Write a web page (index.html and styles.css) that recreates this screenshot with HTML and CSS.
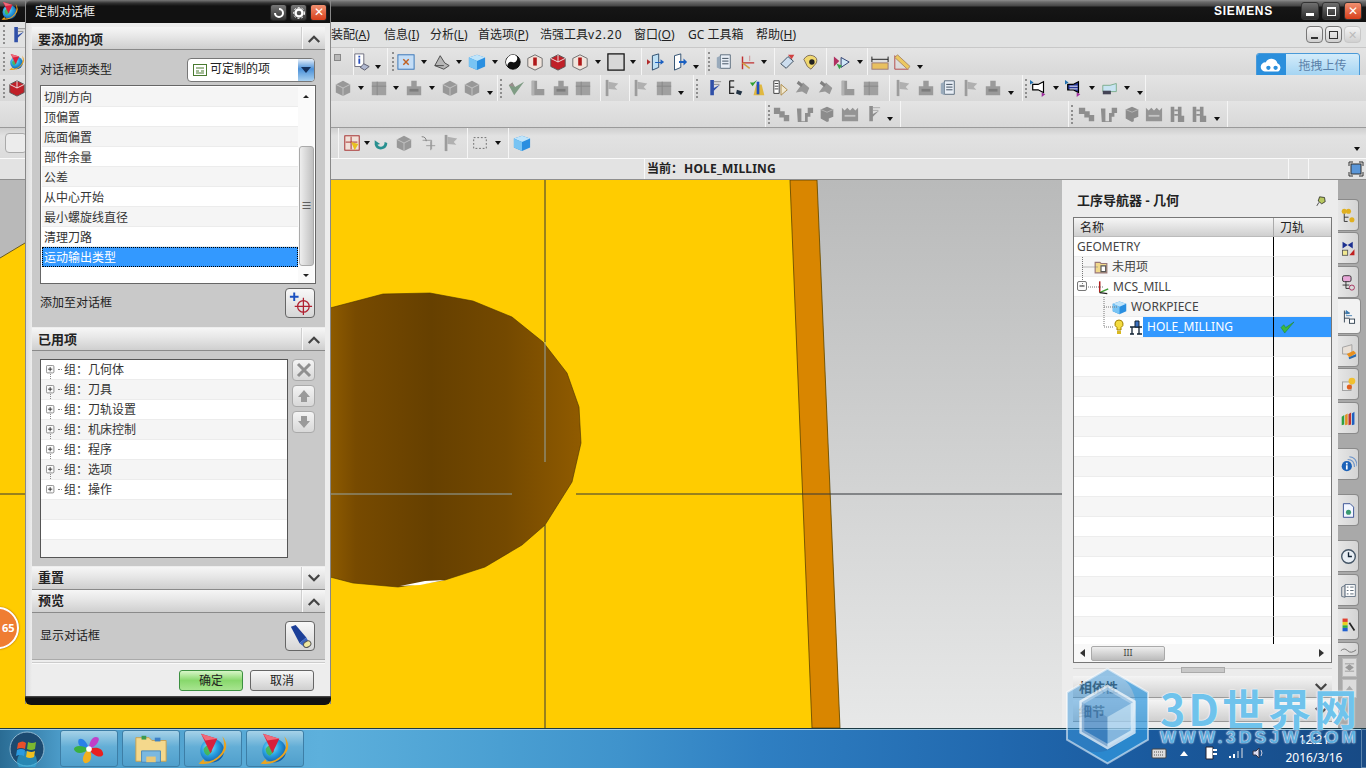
FILE: index.html
```html
<!DOCTYPE html>
<html lang="zh">
<head>
<meta charset="utf-8">
<title>NX</title>
<link rel="stylesheet" href="styles.css">
</head>
<body>
<svg class="defs" width="0" height="0">
<defs>
<radialGradient id="globe" cx=".38" cy=".35" r=".75"><stop offset="0" stop-color="#9fe6f4"/><stop offset=".45" stop-color="#2aa2e2"/><stop offset="1" stop-color="#0b4c9c"/></radialGradient>
</defs>
<symbol id="nx" viewBox="0 0 40 40"><circle cx="19" cy="22" r="14" fill="url(#globe)"/><path d="M9 20q3-6 8-4l2 7-5 5q-5-2-5-8z" fill="#43b649" opacity=".85"/><path d="M6 2l19 6-8 17z" fill="#d81f3c"/><path d="M6 2l19 6-14 2z" fill="#f06a7a"/><path d="M31 5q10 13-2 24T3 37l6-5 1 3q12 0 19-9t2-21z" fill="#eba41f"/></symbol>
<symbol id="gcube" viewBox="0 0 20 20"><path d="M2 6l8-4 8 4v9l-8 4-8-4z" fill="#989898"/><path d="M2 6l8 4 8-4M10 10v9" fill="none" stroke="#c6c6c6"/></symbol>
<symbol id="gl" viewBox="0 0 20 20"><path d="M3 2h6v9h8v7H3z" fill="#989898"/><path d="M3 2h3v16H3z" fill="#b2b2b2"/></symbol>
<symbol id="gs" viewBox="0 0 20 20"><path d="M2 8h5V2h6v6h5v10H2z" fill="#9a9a9a"/><path d="M5 11h10v3H5z" fill="#7c7c7c"/></symbol>
<symbol id="gb" viewBox="0 0 20 20"><rect x="2" y="3" width="16" height="15" fill="#a0a0a0"/><path d="M2 8h16M8 3v15" stroke="#878787"/></symbol>
<symbol id="gf" viewBox="0 0 20 20"><path d="M3 1h3v18H3z" fill="#9c9c9c"/><path d="M6 3l11 2-4 4 3 3-10-1z" fill="#b0b0b0"/></symbol>
<symbol id="gt" viewBox="0 0 20 20"><path d="M2 15l8-11 7 6-3 7-5-3z" fill="#979797"/><path d="M5 2l5 4-2 3-5-4z" fill="#808080"/></symbol>
<symbol id="stair" viewBox="0 0 20 20"><path d="M1 3h7v4h5v4h5v7h-6v-4H7v-4H1z" fill="#8e8e8e"/></symbol>
<symbol id="twin" viewBox="0 0 20 20"><path d="M1 4h5v14h4V9h3V3h6v6h-3v4h-3v6H2z" fill="#8e8e8e"/></symbol>
<symbol id="block" viewBox="0 0 20 20"><path d="M3 5l7-3 7 3v8l-5 2v3l-2 1-7-4z" fill="#8c8c8c"/><path d="M3 5l7 3 7-3" fill="none" stroke="#b8b8b8"/></symbol>
<symbol id="fact" viewBox="0 0 20 20"><path d="M1 8V3l3 3 3-3 3 3 3-3 3 3 3-3v15H1z" fill="#949494"/><path d="M4 11h12v2H4z" fill="#c4c4c4"/></symbol>
<symbol id="ladder" viewBox="0 0 20 20"><path d="M3 2h4v17H3zM11 2h4v10h3v7h-7z" fill="#8e8e8e"/><path d="M7 6h4M7 11h4" stroke="#8e8e8e" stroke-width="2"/></symbol>
<symbol id="check" viewBox="0 0 20 20"><path d="M2 7l6 11L19 3 9 9 6 4z" fill="#7f9c84"/><path d="M2 7l4-3 2 5z" fill="#9a8d8d"/></symbol>
<symbol id="info" viewBox="0 0 20 20"><path d="M2 1h10v14H2z" fill="#fff" stroke="#667"/><path d="M6 3h2v2H6zM6 6h2v6H6z" fill="#2a50c0"/><path d="M12 12l6 3-5 4-5-3z" fill="#b0b8d0" stroke="#556"/></symbol>
<symbol id="fit" viewBox="0 0 20 20"><rect x="1" y="2" width="18" height="16" fill="#c4ddf6" stroke="#2f6fb5"/><path d="M7 7l6 6M13 7l-6 6" stroke="#c06020" stroke-width="1.600"/></symbol>
<symbol id="hat" viewBox="0 0 20 20"><path d="M2 14l6-11 5 8 5 3-6 4z" fill="#b7b7b7" stroke="#444"/><path d="M2 14l10 0" stroke="#444"/></symbol>
<symbol id="cube" viewBox="0 0 20 20"><path d="M1 5l9-3 9 3v10l-9 4-9-4z" fill="#2a8fe0"/><path d="M1 5l9-3 9 3-9 4z" fill="#bfe4fa"/><path d="M1 5l9 4v10l-9-4z" fill="#78c4f4"/></symbol>
<symbol id="disc" viewBox="0 0 20 20"><circle cx="10" cy="10" r="8" fill="#111" stroke="#000"/><path d="M4 15A8 8 0 0 1 12 2.300 4 4 0 0 1 9 10a4 4 0 0 0-5 5z" fill="#fff"/></symbol>
<symbol id="rc" viewBox="0 0 20 20"><path d="M2 6l8-4 8 4v9l-8 4-8-4z" fill="#f0e4dc" stroke="#666"/><path d="M8 5h4v9H8z" fill="#b01818"/></symbol>
<symbol id="rd" viewBox="0 0 20 20"><path d="M2 6l8-4 8 4v9l-8 4-8-4z" fill="#c02028" stroke="#555"/><path d="M10 2v8l8-4M10 10L2 6" fill="none" stroke="#eee"/></symbol>
<symbol id="box" viewBox="0 0 20 20"><rect x="1" y="1" width="18" height="18" fill="#d8d8d8" stroke="#111" stroke-width="1.400"/></symbol>
<symbol id="door" viewBox="0 0 20 20"><path d="M6 3l7-2v15l-7 3z" fill="#bfe0f4" stroke="#246"/><path d="M0 7l4 3-4 3z" fill="#b02a2a"/><path d="M9 10h6V7l4 3-4 3v-2H9z" fill="#1a5fc0"/></symbol>
<symbol id="door2" viewBox="0 0 20 20"><path d="M5 3l7-2v15l-7 3z" fill="#fff" stroke="#246"/><path d="M10 9h5V6l4 4-4 4v-3h-5z" fill="#1a5fc0"/></symbol>
<symbol id="list" viewBox="0 0 20 20"><path d="M6 2h11v15H6z" fill="#e8eef6" stroke="#567"/><path d="M2 5l4-2v15l-4-2z" fill="#9ab"/><path d="M8 6h7M8 9h7M8 12h7" stroke="#345"/></symbol>
<symbol id="csys" viewBox="0 0 20 20"><path d="M5 18V4M5 11h13" stroke="#c03030" stroke-width="1.600" fill="none"/><path d="M5 11l8 6" stroke="#d0a040" stroke-width="1.600"/><path d="M13 3v6" stroke="#d09090"/></symbol>
<symbol id="pen" viewBox="0 0 20 20"><path d="M2 12l8-8 6 5-8 8z" fill="#cde" stroke="#345"/><path d="M10 2l7 0-3 5z" fill="#d04040"/></symbol>
<symbol id="eye" viewBox="0 0 20 20"><path d="M2 7q4-6 10-4t4 8l-6 7-4-3z" fill="#f0d870" stroke="#765"/><circle cx="11" cy="10" r="3" fill="#222"/></symbol>
<symbol id="prj" viewBox="0 0 20 20"><path d="M9 5l9 5-9 6z" fill="#d0e8f8" stroke="#236"/><path d="M1 4l6 5-6 6z" fill="#b03060"/><path d="M4 12l3 6 3-4z" fill="#38a048"/></symbol>
<symbol id="ruler" viewBox="0 0 20 20"><path d="M1 4v6M19 4v6M1 7h18" stroke="#111"/><rect x="1" y="11" width="18" height="7" fill="#e8c060" stroke="#977"/></symbol>
<symbol id="angle" viewBox="0 0 20 20"><path d="M2 3v15h15z" fill="none" stroke="#b04040"/><path d="M5 2l14 13-3 3L2 5z" fill="#ecc860" stroke="#a86"/></symbol>
<symbol id="tool" viewBox="0 0 20 20"><path d="M7 1h4v9l7-4-7 7v5H7z" fill="#3050a8"/><path d="M11 3h8M11 6h6" stroke="#888"/></symbol>
<symbol id="gtool" viewBox="0 0 20 20"><path d="M7 1h4v9l7-4-7 7v5H7z" fill="#8e8e8e"/><path d="M11 3h8M11 6h6" stroke="#a8a8a8"/></symbol>
<symbol id="seq" viewBox="0 0 20 20"><path d="M3 2h5M3 2v7h5M3 9v7h5" fill="none" stroke="#222" stroke-width="1.400"/><path d="M11 12l6 2-2 4-5-2z" fill="#234"/></symbol>
<symbol id="tick" viewBox="0 0 20 20"><path d="M8 6h6l3 12H5z" fill="#e0b840"/><path d="M10 3v14" stroke="#2050c0" stroke-width="3"/><path d="M1 4l3 4 5-7-4 3z" fill="#30a030"/></symbol>
<symbol id="docs" viewBox="0 0 20 20"><path d="M2 2h6v14H2z" fill="#fff" stroke="#333"/><path d="M3 5h4M3 8h4M3 11h4" stroke="#333"/><path d="M10 6l7 6-7 6z" fill="#f0e8d0" stroke="#a84"/></symbol>
<symbol id="horn" viewBox="0 0 20 20"><path d="M3 6h6l6-3v12l-6-3H3z" fill="#fff" stroke="#000" stroke-width="1.300"/><path d="M0 1l4 3-4 2z" fill="#2070b0"/><path d="M13 15l4 2-4 3z" fill="#a030a0"/></symbol>
<symbol id="horn2" viewBox="0 0 20 20"><path d="M3 6h6l6-3v12l-6-3H3z" fill="#283898" stroke="#000" stroke-width="1.300"/><path d="M5 8h9M5 11h9" stroke="#fff"/><path d="M0 1l4 3-4 2z" fill="#2070b0"/><path d="M13 15l4 2-4 3z" fill="#a030a0"/></symbol>
<symbol id="horn3" viewBox="0 0 20 20"><path d="M2 7h8l7-2v9H2z" fill="#c8e4f2" stroke="#7a8"/><path d="M2 13h9v4H2z" fill="#445"/></symbol>
<symbol id="sel" viewBox="0 0 20 20"><rect x="2" y="2" width="16" height="16" fill="#f0e0d8" stroke="#a02020"/><path d="M9 3v14M3 9h13" stroke="#a02020"/><path d="M9 9l8 2-4 7z" fill="#e8c020"/></symbol>
<symbol id="undo" viewBox="0 0 20 20"><path d="M3 12q2 6 8 5t6-7l-3-1q0 4-3 5t-5-2l3-1-6-4z" fill="#289090"/></symbol>
<symbol id="cad" viewBox="0 0 20 20"><path d="M4 7h10v10" fill="none" stroke="#999"/><path d="M3 3q5 0 5 5" fill="none" stroke="#777"/><path d="M13 8v10M8 13h10" stroke="#999"/></symbol>
<symbol id="dash" viewBox="0 0 20 20"><rect x="3" y="4" width="14" height="12" fill="none" stroke="#666" stroke-dasharray="2 2"/></symbol>
<symbol id="pin" viewBox="0 0 20 20"><path d="M8 4l7 1 1 6-5 3-5-4z" fill="#b8c860" stroke="#111"/><path d="M7 12l-3 5" stroke="#111"/></symbol>
<symbol id="plus" viewBox="0 0 12 12"><rect x=".5" y=".5" width="9" height="9" rx="1.500" fill="#fafafa" stroke="#777"/><path d="M2.500 5h5M5 2.500v5" stroke="#222"/></symbol>
<symbol id="minus" viewBox="0 0 12 12"><rect x=".5" y=".5" width="9" height="9" rx="1.500" fill="#fafafa" stroke="#777"/><path d="M2.500 5h5" stroke="#222"/></symbol>
<symbol id="up" viewBox="0 0 16 10"><path d="M2 9l6-6 6 6" fill="none" stroke="#444" stroke-width="2.600"/></symbol>
<symbol id="down" viewBox="0 0 16 10"><path d="M2 1l6 6 6-6" fill="none" stroke="#444" stroke-width="2.600"/></symbol>
</svg>

<div class="app">
  <header class="titlebar">
    <svg class="applogo"><use href="#nx"/></svg>
    <span class="brand">SIEMENS</span>
    <span class="winbtn min"><i></i></span>
    <span class="winbtn max"><i></i></span>
    <span class="winbtn close">✕</span>
  </header>

  <nav class="menubar">
    <span class="lead"><span class="grip"></span><span class="i"><svg><use href="#tool"/></svg></span></span>
    <span class="menu w53">装配(<u>A</u>)</span><span class="menu w46">信息(<u>I</u>)</span><span class="menu w48">分析(<u>L</u>)</span><span class="menu w62">首选项(<u>P</u>)</span><span class="menu w94">浩强工具<span class="ver">v2.20</span></span><span class="menu w54">窗口(<u>O</u>)</span><span class="menu w68">GC 工具箱</span><span class="menu">帮助(<u>H</u>)</span>
    <span class="mdi"><b class="mb"><i class="u1"></i></b><b class="mb"><i class="u2"></i></b><b class="mb off">✕</b></span>
  </nav>

  <div class="tb r1">
    <span class="lead"><span class="grip"></span><span class="i"><svg><use href="#nx"/></svg></span></span>
    <span class="stub"><i></i></span><span class="sep"></span>
    <span class="i n"><svg><use href="#info"/></svg></span><span class="s3"></span><span class="a low"></span><span class="s2"></span><span class="sep"></span><span class="s4"></span><span class="grip"></span>
    <span class="i"><svg><use href="#fit"/></svg></span><span class="a"></span>
    <span class="i"><svg><use href="#hat"/></svg></span><span class="a"></span>
    <span class="i"><svg><use href="#cube"/></svg></span><span class="a"></span>
    <span class="i"><svg><use href="#disc"/></svg></span>
    <span class="i"><svg><use href="#rc"/></svg></span>
    <span class="i"><svg><use href="#rd"/></svg></span>
    <span class="i"><svg><use href="#rc"/></svg></span><span class="a"></span>
    <span class="i"><svg><use href="#box"/></svg></span><span class="a"></span><span class="s1"></span><span class="sep"></span><span class="s3"></span>
    <span class="i"><svg><use href="#door"/></svg></span>
    <span class="i"><svg><use href="#door2"/></svg></span><span class="a low"></span><span class="s2"></span><span class="sep"></span><span class="s2"></span><span class="grip"></span><span class="s2"></span>
    <span class="i"><svg><use href="#list"/></svg></span>
    <span class="i"><svg><use href="#csys"/></svg></span><span class="a"></span><span class="s3"></span><span class="sep"></span><span class="s2"></span>
    <span class="i"><svg><use href="#pen"/></svg></span>
    <span class="i"><svg><use href="#eye"/></svg></span><span class="s4"></span><span class="sep"></span><span class="s4"></span>
    <span class="i"><svg><use href="#prj"/></svg></span><span class="a"></span><span class="sep"></span><span class="s1"></span>
    <span class="i"><svg><use href="#ruler"/></svg></span>
    <span class="i"><svg><use href="#angle"/></svg></span><span class="a low"></span>
    <span class="upload"><span class="upicon"><svg viewBox="0 0 28 20"><path d="M6 16a5 5 0 0 1 1-10 7 7 0 0 1 13 1 5 5 0 0 1 1 9z" fill="#fff"/><circle cx="10" cy="12" r="2.400" fill="#2b8fdc"/><circle cx="18" cy="12" r="2.400" fill="#2b8fdc"/></svg></span><span class="uptext">拖拽上传</span></span>
  </div>

  <div class="tb r2">
    <span class="lead"><span class="grip"></span><span class="i"><svg><use href="#rd"/></svg></span></span>
    <span class="s1"></span>
    <span class="i"><svg><use href="#gcube"/></svg></span><span class="a"></span>
    <span class="i"><svg><use href="#gb"/></svg></span><span class="a"></span>
    <span class="i"><svg><use href="#gs"/></svg></span><span class="a"></span>
    <span class="i"><svg><use href="#gcube"/></svg></span>
    <span class="i"><svg><use href="#gcube"/></svg></span><span class="a low"></span><span class="sep"></span><span class="s2"></span><span class="grip"></span><span class="s2"></span>
    <span class="i"><svg><use href="#check"/></svg></span>
    <span class="i"><svg><use href="#gl"/></svg></span>
    <span class="i"><svg><use href="#gs"/></svg></span>
    <span class="i"><svg><use href="#gb"/></svg></span><span class="s5"></span><span class="sep"></span>
    <span class="i"><svg><use href="#gf"/></svg></span><span class="s6"></span><span class="sep"></span>
    <span class="i"><svg><use href="#gf"/></svg></span>
    <span class="i"><svg><use href="#gb"/></svg></span><span class="a low"></span><span class="s5"></span><span class="sep"></span><span class="s2"></span><span class="grip"></span><span class="s3"></span>
    <span class="i"><svg><use href="#tool"/></svg></span>
    <span class="i"><svg><use href="#seq"/></svg></span>
    <span class="i"><svg><use href="#tick"/></svg></span>
    <span class="i"><svg><use href="#docs"/></svg></span>
    <span class="i"><svg><use href="#gt"/></svg></span>
    <span class="i"><svg><use href="#gt"/></svg></span>
    <span class="i"><svg><use href="#gl"/></svg></span>
    <span class="i"><svg><use href="#gb"/></svg></span><span class="s7"></span><span class="sep"></span><span class="s2"></span>
    <span class="i"><svg><use href="#gf"/></svg></span>
    <span class="i"><svg><use href="#gs"/></svg></span>
    <span class="i"><svg><use href="#list"/></svg></span>
    <span class="i"><svg><use href="#gf"/></svg></span>
    <span class="i"><svg><use href="#gs"/></svg></span><span class="a low"></span><span class="s4"></span><span class="sep"></span><span class="s2"></span><span class="grip"></span>
    <span class="i"><svg><use href="#horn"/></svg></span><span class="a"></span>
    <span class="i"><svg><use href="#horn2"/></svg></span><span class="a"></span>
    <span class="i"><svg><use href="#horn3"/></svg></span><span class="a"></span><span class="a tiny low"></span>
    <span class="sep"></span>
  </div>

  <div class="tb r3">
    <span class="push1"></span><span class="sep"></span><span class="s2"></span><span class="grip"></span>
    <span class="i"><svg><use href="#stair"/></svg></span>
    <span class="i"><svg><use href="#twin"/></svg></span>
    <span class="i"><svg><use href="#block"/></svg></span>
    <span class="i"><svg><use href="#fact"/></svg></span>
    <span class="i"><svg><use href="#gtool"/></svg></span><span class="a low"></span><span class="s3"></span><span class="sep"></span>
    <span class="push2"></span><span class="sep"></span><span class="s2"></span><span class="grip"></span><span class="s2"></span>
    <span class="i"><svg><use href="#stair"/></svg></span>
    <span class="i"><svg><use href="#twin"/></svg></span>
    <span class="i"><svg><use href="#block"/></svg></span>
    <span class="i"><svg><use href="#fact"/></svg></span>
    <span class="i"><svg><use href="#ladder"/></svg></span>
    <span class="i"><svg><use href="#ladder"/></svg></span><span class="a low"></span><span class="s3"></span><span class="sep"></span>
  </div>

  <div class="tb r4">
    <span class="lead"><span class="field"></span></span>
    <span class="s7"></span><span class="sep"></span><span class="s2"></span>
    <span class="i"><svg><use href="#sel"/></svg></span><span class="a tight"></span>
    <span class="i"><svg><use href="#undo"/></svg></span>
    <span class="i"><svg><use href="#gcube"/></svg></span><span class="s2"></span>
    <span class="i"><svg><use href="#cad"/></svg></span>
    <span class="i"><svg><use href="#gf"/></svg></span><span class="s5"></span><span class="sep"></span><span class="s1"></span>
    <span class="i"><svg><use href="#dash"/></svg></span><span class="a"></span><span class="s3"></span><span class="sep"></span><span class="s2"></span>
    <span class="i"><svg><use href="#cube"/></svg></span>
    <span class="a far"></span>
  </div>

  <div class="status">
    <span class="cell cur">当前：<span class="hm">HOLE_MILLING</span></span>
    <span class="cell c2"></span>
    <span class="cell c3"></span>
    <span class="fs"><svg viewBox="0 0 16 16"><rect x="3" y="3" width="10" height="10" fill="#5a96d8" stroke="#333"/><path d="M1 5V1h4M11 1h4v4M15 11v4h-4M5 15H1v-4" fill="none" stroke="#333"/></svg></span>
  </div>

  <main class="work">
    <svg class="canvas" viewBox="0 0 1062 548">
      <defs>
        <linearGradient id="grayg" x1="0" y1="0" x2="0" y2="1"><stop offset="0" stop-color="#b9baba"/><stop offset="1" stop-color="#e7e8e8"/></linearGradient>
        <linearGradient id="brown" gradientUnits="userSpaceOnUse" x1="331" y1="0" x2="581" y2="0"><stop offset="0" stop-color="#8d5a00"/><stop offset=".1" stop-color="#774a00"/><stop offset=".4" stop-color="#664000"/><stop offset=".7" stop-color="#744900"/><stop offset="1" stop-color="#905b00"/></linearGradient>
      </defs>
      <rect width="1062" height="548" fill="#ffcc00"/>
      <path d="M817 0H1062V548H840z" fill="url(#grayg)"/>
      <path d="M790 0H817L840 548H812z" fill="#d98600" stroke="#5c4200" stroke-width=".8"/>
      <path d="M0 0H25V63L0 78z" fill="#b9b9b9"/>
      <path d="M25 63L0 78" stroke="#6a5a20"/>
      <path d="M0 314H25M576 314H1062M545 0V162M545 345V548" stroke="#33363a" fill="none"/>
      <path d="M330 128L383 114 430 113 473 121 512 137 543 162 567 193 579 227 581 263 572 302 545 345 522 365 485 387 445 400 398 407 353 403 330 397z" fill="url(#brown)" stroke="#4a3000" stroke-width=".6"/>
      <path d="M400 406L425 401 445 400 420 405z" fill="#fff"/>
      <path d="M330 314H512M545 162V282" stroke="#94a5a5" fill="none"/>
    </svg>

    <section class="nav">
      <div class="navtitle"><span>工序导航器 - 几何</span><svg class="pin"><use href="#pin"/></svg></div>
      <div class="navtable">
        <div class="thead"><span>名称</span><span>刀轨</span></div>
        <div class="rows">
          <div class="row"><span class="name">GEOMETRY</span><span class="col"></span></div>
          <div class="row"><span class="name l1"><svg class="fold" viewBox="0 0 12 12"><path d="M1 2h4l1 1h5v8H1z" fill="#f0d88a" stroke="#977"/><path d="M6 5h4v5H6z" fill="#fff" stroke="#555"/></svg>未用项</span><span class="col"></span></div>
          <div class="row"><span class="name l1b"><svg class="tb-box"><use href="#minus"/></svg><svg class="xyz" viewBox="0 0 18 16"><path d="M5 14V2" stroke="#b02020" stroke-width="1.600"/><path d="M5 14l9-4" stroke="#3a9a30" stroke-width="1.600"/><path d="M5 14l8 1" stroke="#222" stroke-width="1.400"/></svg>MCS_MILL</span><span class="col"></span></div>
          <div class="row"><span class="name l2"><svg class="wp"><use href="#cube"/></svg>WORKPIECE</span><span class="col"></span></div>
          <div class="row"><span class="name l2b"><svg class="bulb" viewBox="0 0 10 16"><path d="M5 1a4 4 0 0 1 2 7.500V11H3V8.500A4 4 0 0 1 5 1z" fill="#f4dc40" stroke="#a08000"/><path d="M3 12h4v3H3z" fill="#d8b820"/></svg><svg class="mach" viewBox="0 0 14 16"><path d="M1 8h12M3 8v7M10 8v7M1 15h4M8 15h5" stroke="#123" fill="none" stroke-width="1.300"/><path d="M6 2h4v6H6z" fill="#3a70c0" stroke="#123"/></svg><span class="picked">HOLE_MILLING</span></span><span class="col pickcol"><svg class="tk" viewBox="0 0 16 14"><path d="M1 7l4 6L15 1 6 7 4 4z" fill="#3cb840" stroke="#1a7a20" stroke-width=".5"/></svg></span></div>
          <div class="row"><span class="name"></span><span class="col"></span></div>
          <div class="row"><span class="name"></span><span class="col"></span></div>
          <div class="row"><span class="name"></span><span class="col"></span></div>
          <div class="row"><span class="name"></span><span class="col"></span></div>
          <div class="row"><span class="name"></span><span class="col"></span></div>
          <div class="row"><span class="name"></span><span class="col"></span></div>
          <div class="row"><span class="name"></span><span class="col"></span></div>
          <div class="row"><span class="name"></span><span class="col"></span></div>
          <div class="row"><span class="name"></span><span class="col"></span></div>
          <div class="row"><span class="name"></span><span class="col"></span></div>
          <div class="row"><span class="name"></span><span class="col"></span></div>
          <div class="row"><span class="name"></span><span class="col"></span></div>
          <div class="row"><span class="name"></span><span class="col"></span></div>
          <div class="row"><span class="name"></span><span class="col"></span></div>
          <div class="row"><span class="name"></span><span class="col"></span></div>
          <div class="row"><span class="name"></span><span class="col"></span></div>
          <svg class="treelines" viewBox="0 0 200 100"><path d="M8.500 20V50M8.500 30H24M12 50H30M30 60V90M30 70H44M30 90H40" fill="none" stroke="#777" stroke-dasharray="1 1"/></svg>
        </div>
        <div class="hscroll"><span class="la"></span><span class="thumb">III</span><span class="ra"></span></div>
      </div>
      <div class="split"><span class="handle"></span></div>
      <div class="acc"><span>相依性</span><svg class="chev"><use href="#down"/></svg></div>
      <div class="acc"><span>细节</span><svg class="chev"><use href="#down"/></svg></div>
    </section>

    <aside class="tabs">
      <span class="tab"><svg viewBox="0 0 20 20"><circle cx="5" cy="5" r="3" fill="#e0b020"/><circle cx="10" cy="5" r="3" fill="#e0b020"/><path d="M5 8v9h4M5 12h5" stroke="#222" fill="none"/><circle cx="14" cy="15" r="3" fill="#e0b020"/></svg></span>
      <span class="tab"><svg viewBox="0 0 20 20"><path d="M3 2l6 4 6-4v8l-6-4-6 4z" fill="#1c2f90"/><rect x="3" y="12" width="6" height="6" fill="#f0e890" stroke="#555"/><path d="M11 18l6-7v7z" fill="#c02020"/></svg></span>
      <span class="tab gap2"><svg viewBox="0 0 20 20"><rect x="3" y="2" width="10" height="7" rx="2" fill="#e8a8d8" stroke="#222"/><path d="M7 9v8h4M3 13h8" stroke="#222" fill="none"/><circle cx="14" cy="16" r="3" fill="none" stroke="#a02050"/></svg></span>
      <span class="tab on"><svg viewBox="0 0 20 20"><path d="M4 3v14M4 6h6M4 12h6" stroke="#234" fill="none"/><path d="M6 3l4 3-4 1zM6 9h7" stroke="#3a7ab0" fill="#3a7ab0"/><rect x="10" y="13" width="6" height="5" fill="#fff" stroke="#234"/></svg></span>
      <span class="tab"><svg viewBox="0 0 20 20"><path d="M3 5l11-3v11H3z" fill="#e8e0d8" stroke="#999"/><path d="M8 13l8-4 3 3-8 5z" fill="#e89020"/><path d="M10 17l9-4v3l-8 3z" fill="#2a6ab0"/></svg></span>
      <span class="tab"><svg viewBox="0 0 20 20"><rect x="3" y="7" width="10" height="10" fill="#e8e8e8" stroke="#999"/><circle cx="14" cy="6" r="4" fill="#f0c030"/><circle cx="11" cy="13" r="3" fill="#e06020"/></svg></span>
      <span class="tab gap3"><svg viewBox="0 0 20 20"><path d="M2 8l3-2v11l-3 1z" fill="#30a040"/><path d="M6 6l3-2v13l-3 1z" fill="#e09020"/><path d="M10 5l3-2v14l-3 1z" fill="#c03030"/><path d="M14 4l3-2v15l-3 1z" fill="#2060c0"/></svg></span>
      <span class="tab gap14"><svg viewBox="0 0 20 20"><circle cx="8" cy="12" r="6" fill="#1c62b8"/><path d="M7 8h2v2H7zM7 11h2v5H7z" fill="#fff"/><path d="M9 4q8 0 8 9M11 1q9 1 9 11" fill="none" stroke="#6a92c8" stroke-width="1.200"/></svg></span>
      <span class="tab gap14"><svg viewBox="0 0 20 20"><path d="M4 2h8l4 4v12H4z" fill="#f2f6ff" stroke="#24408a"/><circle cx="10" cy="12" r="3" fill="#3a9a70"/></svg></span>
      <span class="tab gap14"><svg viewBox="0 0 20 20"><circle cx="10" cy="10" r="8" fill="#e8eef4" stroke="#456" stroke-width="1.600"/><path d="M10 5v5h4" stroke="#123" fill="none" stroke-width="1.600"/></svg></span>
      <span class="tab gap2"><svg viewBox="0 0 20 20"><path d="M2 6l4-2v14l-4-1z" fill="#ddd" stroke="#567"/><path d="M6 3h12v14H6z" fill="#fff" stroke="#567"/><path d="M8 6h2M12 6h4M8 10h2M12 10h4M8 14h2M12 14h4" stroke="#456"/></svg></span>
      <span class="tab gap2"><svg viewBox="0 0 20 20"><rect x="3" y="3" width="6" height="4" fill="#e04030"/><rect x="3" y="7" width="6" height="4" fill="#e8d020"/><rect x="3" y="11" width="6" height="3" fill="#30b040"/><rect x="3" y="14" width="6" height="4" fill="#2060d0"/><path d="M11 8l6 9" stroke="#222" stroke-width="2"/></svg></span>
      <span class="tab stub2"><svg viewBox="0 0 20 10"><path d="M1 7q4-4 8 0t10-1" stroke="#666" fill="none"/></svg></span>
      <span class="sq"><svg viewBox="0 0 12 12"><path d="M1 2h10M1 10h10M6 3l4 3H2zM6 9l4-3H2z" fill="#999" stroke="#999"/></svg></span>
      <span class="sq"><svg viewBox="0 0 12 12"><path d="M6 3l4 5H2z" fill="#aaa"/></svg></span>
    </aside>
  </main>

  <footer class="taskbar">
    <span class="orb"><svg viewBox="0 0 36 36"><circle cx="18" cy="18" r="17" fill="#1c4a70" stroke="#8fb8d0"/><circle cx="18" cy="30" r="10" fill="#30b0e0" opacity=".6"/><path d="M9 12q5-3 8 0l-1 6q-4-2-8 0z" fill="#e8502a"/><path d="M19 11q4 2 8 0l-1 7q-4 2-8 0z" fill="#7ab830"/><path d="M8 19q4-2 8 0l-1 6q-4-2-8 0z" fill="#2a9ae0"/><path d="M18 20q4 2 8 0l-1 6q-4 2-8 0z" fill="#f0c020"/></svg></span>
    <span class="task"><svg viewBox="0 0 36 36"><path d="M18 18C10 18 5 14 7 8c4-3 9 3 11 10z" fill="#2a80e8"/><path d="M18 18C18 10 22 3 28 6c2 4-4 10-10 12z" fill="#c040c8"/><path d="M18 18c8-3 15-1 15 6-3 5-12 0-15-6z" fill="#e82020"/><path d="M18 18c4 6 3 15-4 15-5-2-2-11 4-15z" fill="#f0b020"/><path d="M18 18c-6 5-14 6-16 0 2-5 10-3 16 0z" fill="#3ab040"/><circle cx="18" cy="18" r="3" fill="#fff"/></svg></span>
    <span class="task"><svg viewBox="0 0 36 36"><path d="M2 6h14l3 3h15v22H2z" fill="#f4d88c" stroke="#c8a050"/><path d="M8 4h5v4H8z" fill="#3a9a50"/><path d="M22 6h6v4h-6z" fill="#3a80c8"/><path d="M8 20h20v12H8z" fill="#7ab8e0" stroke="#4a88b8"/><path d="M13 26h10v6H13z" fill="#e8c878"/></svg></span>
    <span class="task"><svg class="nxi"><use href="#nx"/></svg></span>
    <span class="task"><svg class="nxi"><use href="#nx"/></svg></span>
    <span class="tray">
      <svg class="tr kb" viewBox="0 0 16 12"><rect x="1" y="2" width="14" height="9" rx="1" fill="#ddd" stroke="#444"/><path d="M3 5h10M3 8h10" stroke="#555" stroke-dasharray="1 1"/></svg>
      <span class="caret"></span>
      <svg class="tr plug" viewBox="0 0 14 16"><path d="M2 2h7v12H2z" fill="#fff" stroke="#223"/><path d="M9 5h4M9 9h4" stroke="#fff" stroke-width="2"/></svg>
      <svg class="tr sig" viewBox="0 0 16 12"><path d="M1 9h2v2H1zM5 7h2v4H5z" fill="#fff"/><path d="M9 4h2v7H9zM13 1h2v10h-2z" fill="#7d9bbd"/></svg>
      <svg class="tr spk" viewBox="0 0 14 14"><path d="M2 5h3l3-3v10L5 9H2z" fill="#dde" stroke="#334"/><path d="M10 4q2 3 0 6" fill="none" stroke="#ccd"/></svg>
      <span class="clock"><span>12:21</span><span>2016/3/16</span></span>
      <span class="desk"></span>
    </span>
  </footer>

  <div class="bubble">65</div>

  <section class="dialog">
    <div class="dtitle"><span>定制对话框</span><span class="dbtns"><b class="db"><svg viewBox="0 0 12 12"><path d="M6 2a4 4 0 1 1-4 4" fill="none" stroke="#fff" stroke-width="2"/></svg></b><b class="db"><svg viewBox="0 0 12 12"><circle cx="6" cy="6" r="3.500" fill="none" stroke="#fff" stroke-width="2.400"/><circle cx="6" cy="6" r="5.500" fill="none" stroke="#fff" stroke-dasharray="2 2"/></svg></b><b class="db x">✕</b></span></div>
    <div class="dbody">
      <div class="sh first"><span>要添加的项</span><em><svg><use href="#up"/></svg></em></div>
      <div class="sb sb1">
        <div class="frow"><span class="lbl">对话框项类型</span>
          <span class="combo"><svg class="cico" viewBox="0 0 14 14"><rect x=".5" y="1.500" width="13" height="11" fill="#fff" stroke="#4a7a30"/><path d="M3 5h8M3 8h3M8 8h3M3 10h8" stroke="#4a7a30"/></svg><span>可定制的项</span><i class="cdrop"></i></span>
        </div>
        <div class="ilist">
          <ul class="items">
            <li>切削方向</li><li>顶偏置</li><li>底面偏置</li><li>部件余量</li><li>公差</li><li>从中心开始</li><li>最小螺旋线直径</li><li>清理刀路</li><li class="sel">运动输出类型</li>
          </ul>
          <div class="vscroll"><i class="tu"></i><span class="vthumb">≡</span><i class="td"></i></div>
        </div>
        <div class="frow add"><span>添加至对话框</span>
          <span class="ibtn"><svg viewBox="0 0 28 28"><path d="M3 7h9M7.500 2.500v9" stroke="#1a50c0" stroke-width="2"/><circle cx="17" cy="17" r="6" fill="none" stroke="#b02030" stroke-width="1.300"/><path d="M17 8v18M8 17h18" stroke="#b02030" stroke-width="1.300"/></svg></span>
        </div>
      </div>

      <div class="sh"><span>已用项</span><em><svg><use href="#up"/></svg></em></div>
      <div class="sb sb2">
        <ul class="used">
          <li><svg class="pl"><use href="#plus"/></svg><i class="dt"></i><span>组：几何体</span></li>
          <li><svg class="pl"><use href="#plus"/></svg><i class="dt"></i><span>组：刀具</span></li>
          <li><svg class="pl"><use href="#plus"/></svg><i class="dt"></i><span>组：刀轨设置</span></li>
          <li><svg class="pl"><use href="#plus"/></svg><i class="dt"></i><span>组：机床控制</span></li>
          <li><svg class="pl"><use href="#plus"/></svg><i class="dt"></i><span>组：程序</span></li>
          <li><svg class="pl"><use href="#plus"/></svg><i class="dt"></i><span>组：选项</span></li>
          <li><svg class="pl"><use href="#plus"/></svg><i class="dt"></i><span>组：操作</span></li>
          <li></li><li></li><li></li>
        </ul>
        <div class="side">
          <span class="sbtn"><svg viewBox="0 0 18 18"><path d="M3 3l12 12M15 3L3 15" stroke="#909090" stroke-width="3"/></svg></span>
          <span class="sbtn"><svg viewBox="0 0 18 18"><path d="M9 3l6 7h-3v5H6v-5H3z" fill="#9a9a9a"/></svg></span>
          <span class="sbtn"><svg viewBox="0 0 18 18"><path d="M9 15l6-7h-3V3H6v5H3z" fill="#9a9a9a"/></svg></span>
        </div>
      </div>

      <div class="sh h2"><span>重置</span><em><svg><use href="#down"/></svg></em></div>
      <div class="sh h2 t1"><span>预览</span><em><svg><use href="#up"/></svg></em></div>
      <div class="sb sb3">
        <div class="frow add"><span>显示对话框</span>
          <span class="ibtn"><svg viewBox="0 0 28 28"><path d="M4 4l5-2 11 13-7 6z" fill="#1c3f98"/><path d="M20 15l4 7-6 3-5-4z" fill="#3a64c0"/><ellipse cx="21" cy="22" rx="4" ry="3" fill="#f0e8a0" stroke="#555" transform="rotate(-30 21 22)"/></svg></span>
        </div>
      </div>
      <div class="dfoot"><span class="btn ok">确定</span><span class="btn">取消</span></div>
    </div>
    <div class="dbottom"></div>
  </section>

  <div class="mark">
    <svg class="hex" viewBox="0 0 86 98"><path d="M43 1l41 24v48L43 97 2 73V25z" fill="#3b98dc" fill-opacity=".5"/><path d="M84 25v48L43 97 20 84q30 8 45-22t-5-50z" fill="#2a9ae0" fill-opacity=".45"/><path d="M43 1l41 24v48L43 97 2 73V25z" fill="none" stroke="#fff" stroke-opacity=".55" stroke-width="2"/><path d="M43 20l26 15v30L43 80 17 65V35z" fill="none" stroke="#fff" stroke-opacity=".7" stroke-width="5"/><path d="M43 20l26 15-26 15-26-15z" fill="#6ea8d8" fill-opacity=".5"/><path d="M17 35l26 15v30L17 65z" fill="#4b83bc" fill-opacity=".55"/><path d="M43 50l26-15v30L43 80z" fill="#cde8f8" fill-opacity=".55"/></svg>
    <div class="marktext"><span class="m1">3D世界网</span><span class="m2">WWW.3DSJW.COM</span></div>
  </div>
</div>
</body>
</html>
```

FILE: styles.css
```css
* { box-sizing: border-box; }
html, body { margin: 0; padding: 0; }
body { width: 1366px; height: 768px; overflow: hidden; background: #000; font: 12px/1.2 "Noto Sans", "Noto Sans CJK SC", sans-serif; color: #222; }
.defs { position: absolute; }
ul { list-style: none; margin: 0; padding: 0; }
em, i, b { font-style: normal; font-weight: normal; }

.app { position: relative; width: 1366px; height: 768px; display: flex; flex-direction: column; overflow: hidden; }

/* title bar */
.titlebar { height: 22px; flex: none; display: flex; align-items: center; background: linear-gradient(#8d8d8d 0, #6a6a6a 2px, #444 6px, #161616 7px, #111 100%); color: #fff; }
.applogo { width: 20px; height: 20px; }
.brand { margin-left: 1194px; width: 87px; font: 700 12px "Liberation Sans", sans-serif; letter-spacing: .7px; }
.winbtn { width: 18px; height: 18px; margin-right: 3px; border: 1px solid #333; border-radius: 3px; background: linear-gradient(#707070, #2b2b2b); color: #fff; display: flex; align-items: center; justify-content: center; font-size: 12px; }
.winbtn.close { background: linear-gradient(#f09070, #d8401c); margin-left: 1px; }
.winbtn.min i { width: 8px; height: 3px; background: #fff; margin-top: 7px; }
.winbtn.max i { width: 9px; height: 9px; border: 1px solid #fff; border-top-width: 2px; }

/* menu */
.menubar { height: 26px; flex: none; display: flex; align-items: center; background: #e1e2e2; border-bottom: 1px solid #c8c8c8; color: #222; }
.lead { width: 331px; flex: none; display: flex; align-items: center; padding-left: 3px; }
.menu { white-space: nowrap; padding-top: 1px; }
.w53 { width: 53px; } .w46 { width: 46px; } .w48 { width: 48px; } .w62 { width: 62px; } .w94 { width: 94px; } .w54 { width: 54px; } .w68 { width: 68px; }
.ver { letter-spacing: .9px; }
.menu u { text-decoration: underline; }
.mdi { margin-left: auto; margin-right: 5px; display: flex; gap: 2px; }
.mb { width: 17px; height: 17px; border: 1px solid #777; border-radius: 4px; background: linear-gradient(#f4f4f4, #d0d0d0); display: flex; align-items: center; justify-content: center; font-size: 11px; }
.mb.off { color: #bbb; border-color: #c8c8c8; }
.u1 { width: 7px; height: 2px; background: #333; margin-top: 7px; }
.u2 { width: 9px; height: 8px; border: 1px solid #333; }

/* toolbars */
.tb { flex: none; display: flex; align-items: center; background: linear-gradient(#e4e4e4, #d8d8d8); }
.r1 { height: 27px; }
.r2 { height: 26px; }
.r3 { height: 27px; border-bottom: 1px solid #9a9a9a; }
.r4 { height: 30px; background: linear-gradient(#cfcfcf, #e2e2e2 8px, #dcdcdc); }
.i { width: 22.5px; height: 20px; flex: none; display: flex; align-items: center; justify-content: center; }
.i svg { width: 18px; height: 18px; flex: none; }
.i.n { width: 15px; }
.a { width: 13px; height: 20px; flex: none; position: relative; }
.a::after { content: ""; position: absolute; left: 3px; top: 8px; border: 3.500px solid transparent; border-top: 4px solid #111; border-bottom: 0; }
.a.low::after { top: 13px; }
.a.tiny { width: 11px; }
.a.tight { width: 6.500px; }
.a.tight::after { left: 0; }
.a.far { margin-left: auto; margin-right: 2px; }
.a.far::after { top: 14px; }
.sep { width: 1px; align-self: stretch; flex: none; background: #f5f5f5; }
.grip { width: 3px; height: 19px; flex: none; border-left: 2px dotted #8e8e8e; }
.s1 { width: 1px; flex: none; } .s2 { width: 2px; flex: none; } .s3 { width: 3px; flex: none; } .s4 { width: 4px; flex: none; }
.s5 { width: 5px; flex: none; } .s6 { width: 6px; flex: none; } .s7 { width: 7px; flex: none; }
.stub { width: 22px; flex: none; padding-left: 3px; }
.stub i { display: block; width: 7px; height: 7px; background: #b8b8b8; border: 1px solid #888; margin-bottom: 8px; }
.push1 { width: 765px; flex: none; }
.push2 { width: 167px; flex: none; }
.field { display: block; width: 22px; height: 20px; margin-left: 2px; border: 1px solid #aaa; border-radius: 4px; background: #ececec; }

.upload { margin-left: auto; margin-right: 6px; margin-top: 8px; width: 104px; height: 25px; flex: none; display: flex; border: 1px solid #4a9ad8; border-radius: 3px; overflow: hidden; background: linear-gradient(#d4ecfa, #a0d2f2); }
.upicon { width: 29px; background: #2b8fdc; display: flex; align-items: center; justify-content: center; }
.upicon svg { width: 26px; height: 18px; }
.uptext { flex: 1; text-align: center; line-height: 24px; color: #5a80a8; }

/* status */
.status { height: 22px; flex: none; display: flex; align-items: stretch; background: #e3e3e3; border-top: 1px solid #fafafa; border-bottom: 1px solid #8f8f8f; }
.cell { border-left: 1px solid #f8f8f8; display: flex; align-items: center; }
.cur { margin-left: 644px; width: 644px; padding-left: 2px; font-weight: 700; color: #222; }
.hm { letter-spacing: .2px; margin-left: 1px; }
.c2 { width: 20px; }
.c3 { width: 40px; }
.fs { width: 14px; display: flex; align-items: center; }
.fs svg { width: 16px; height: 16px; flex: none; }

/* workspace */
.work { height: 548px; flex: none; display: flex; }
.canvas { width: 1062px; height: 548px; flex: none; display: block; }

.nav { width: 276px; flex: none; background: #ececec; padding: 0 6px 0 11px; display: flex; flex-direction: column; }
.navtitle { height: 37px; display: flex; align-items: center; justify-content: space-between; padding: 5px 4px 0 4px; font-size: 13px; font-weight: 700; color: #222; }
.pin { width: 14px; height: 14px; }
.navtable { height: 446px; flex: none; border: 1px solid #777; background: #fff; display: flex; flex-direction: column; }
.thead { height: 19px; flex: none; display: grid; grid-template-columns: 199px 1fr; background: linear-gradient(#f6f6f6, #cfcfcf); border-bottom: 1px solid #bbb; line-height: 19px; }
.thead span { padding-left: 6px; }
.thead span + span { border-left: 1px solid #aaa; }
.rows { position: relative; flex: 1; overflow: hidden; }
.row { height: 20px; display: grid; grid-template-columns: 199px 1fr; background: #fff; color: #444; }
.row:nth-child(even) { background: #f6f6f6; }
.name { display: flex; align-items: center; padding-left: 3px; padding-top: 1px; border-bottom: 1px solid #ededed; }
.col { border-left: 1px solid #000; border-bottom: 1px solid #ededed; display: flex; align-items: center; }
.l1 { padding-left: 20px; }
.l1b { padding-left: 3px; }
.l2 { padding-left: 38px; }
.l2b { padding-left: 40px; padding-top: 0; }
.fold { width: 14px; height: 14px; margin-right: 4px; }
.tb-box { width: 12px; height: 12px; margin-right: 6px; }
.xyz { width: 17px; height: 16px; margin-right: 1px; }
.wp { width: 15px; height: 15px; margin-right: 4px; }
.bulb { width: 10px; height: 16px; margin-right: 5px; }
.mach { width: 14px; height: 16px; }
.picked { flex: 1; align-self: stretch; padding-left: 4px; background: #3399ff; color: #fff; line-height: 20px; }
.pickcol { background: #3399ff; padding-left: 6px; }
.tk { width: 15px; height: 13px; }
.treelines { position: absolute; left: 0; top: 0; width: 200px; height: 100px; pointer-events: none; }
.hscroll { height: 18px; flex: none; display: flex; align-items: center; background: #f8f8f8; position: relative; }
.la { border: 4px solid transparent; border-right: 5px solid #333; border-left: 0; margin-left: 6px; }
.ra { border: 4px solid transparent; border-left: 5px solid #333; border-right: 0; margin-left: auto; margin-right: 7px; }
.thumb { width: 74px; height: 15px; margin-left: 6px; border: 1px solid #aaa; border-radius: 2px; background: linear-gradient(#eee, #bbb); text-align: center; font-size: 9px; line-height: 12px; color: #444; }
.split { height: 13px; flex: none; display: flex; justify-content: center; align-items: center; background: linear-gradient(transparent 5px, #d4d4d4 5px, #d4d4d4 6px, transparent 6px); }
.handle { width: 44px; height: 6px; background: #c8c8c8; border: 1px solid #aaa; }
.acc { height: 22px; margin-bottom: 2px; flex: none; display: flex; align-items: center; justify-content: space-between; padding: 2px 4px 0 6px; font-size: 13px; font-weight: 700; background: linear-gradient(#f4f4f4, #cfcfcf); border-bottom: 1px solid #999; color: #333; }
.chev { width: 14px; height: 9px; }

/* right tabs */
.tabs { width: 28px; flex: none; background: #a9a9a9; padding-top: 19px; display: flex; flex-direction: column; gap: 1px; }
.tab { width: 21px; height: 32px; flex: none; background: linear-gradient(90deg, #e6e6e6, #d4d4d4); border: 1px solid #8a8a8a; border-left: 0; border-radius: 0 4px 4px 0; display: flex; align-items: center; justify-content: center; }
.tab svg { width: 17px; height: 17px; }
.tab.on { width: 23px; height: 36px; background: #f2f2f2; margin-top: -1px; }
.gap2 { margin-top: 1px; }
.gap3 { margin-top: 1px; }
.gap14 { margin-top: 13px; }
.tab.stub2 { height: 14px; margin-top: 1px; }
.tab.stub2 svg { height: 10px; }
.sq { width: 15px; height: 19px; margin-left: 4px; margin-top: 1px; flex: none; background: #dcdcdc; border: 1px solid #bbb; display: flex; align-items: center; justify-content: center; }
.sq svg { width: 11px; height: 11px; }

/* taskbar */
.taskbar { height: 40px; flex: none; display: flex; align-items: stretch; border-top: 1px solid #1c3a44; box-shadow: inset 0 1px 0 #a8cfe4; background: linear-gradient(90deg, #2a6c94 0, #4b9bc8 60px, #5db0dc 320px, #4a9fd2 500px, #3f93cc 620px, #2f7fc2 760px, #2168ae 1000px, #1a5a9e 1150px, #174a85 1366px); }
.orb { width: 60px; flex: none; display: flex; align-items: center; padding-left: 9px; }
.orb svg { width: 36px; height: 36px; }
.task { width: 58px; margin-right: 4px; flex: none; border: 1px solid #3d7ea6; border-radius: 3px; margin-top: 1px; margin-bottom: 1px; background: linear-gradient(#a6d2e8, #63aed6 45%, #4f9fcc); display: flex; align-items: center; justify-content: center; }
.task svg { width: 34px; height: 34px; }
.tray { flex: 1; display: flex; align-items: center; color: #fff; padding-left: 843px; }
.tr { flex: none; }
.kb { width: 16px; height: 12px; margin-top: 8px; }
.caret { margin-left: 13px; margin-top: 10px; border: 4px solid transparent; border-bottom: 5px solid #fff; border-top: 0; }
.plug { width: 14px; height: 16px; margin-left: 16px; margin-top: 8px; }
.sig { width: 16px; height: 12px; margin-left: 10px; margin-top: 8px; }
.spk { width: 14px; height: 14px; margin-left: 7px; margin-top: 8px; }
.clock { width: 72px; margin-left: 13px; display: flex; flex-direction: column; align-items: center; color: #fff; line-height: 18px; }
.desk { width: 14px; margin-left: 11px; align-self: stretch; border: 1px solid #5c84ad; background: #1c4c85; }

/* floating */
.bubble { position: absolute; left: -23px; top: 607px; width: 42px; height: 42px; padding-left: 23px; border-radius: 50%; border: 2px solid #fff; background: #ef7d32; color: #fff; font: 700 11px/38px "Noto Sans", sans-serif; box-shadow: 0 0 2px #a05010; }

/* dialog */
.dialog { position: absolute; left: 25px; top: 0; width: 306px; height: 704px; display: flex; flex-direction: column; border-left: 1px solid #888; border-right: 1px solid #888; }
.dtitle { height: 23px; flex: none; display: flex; align-items: center; justify-content: space-between; padding: 2px 3px 0 9px; color: #eee; background: linear-gradient(#777 0, #333 3px, #111 6px, #111 100%); border-radius: 6px 6px 0 0; }
.dbtns { display: flex; gap: 3px; }
.db { width: 17px; height: 17px; border: 1px solid #222; border-radius: 3px; background: linear-gradient(#777, #333); display: flex; align-items: center; justify-content: center; color: #fff; font-size: 12px; }
.db svg { width: 12px; height: 12px; }
.db.x { background: linear-gradient(#f09070, #d8401c); }
.dbody { flex: 1; padding: 4px 5px 0 6px; background: linear-gradient(90deg, #dcdcdc, #ededed 6px, #ededed 99%); display: flex; flex-direction: column; }
.sh { height: 23px; flex: none; display: flex; align-items: center; justify-content: space-between; padding-left: 6px; font-size: 13px; font-weight: 700; background: linear-gradient(#f6f6f6, #e8e8e8 40%, #cfcfcf); border-bottom: 1px solid #8a8a8a; color: #222; }
.sh > span { padding-top: 1px; }
.sh.first > span { padding-top: 4px; }
.sh.h2 > span { padding-top: 0; }
.sh em { width: 24px; height: 100%; display: flex; align-items: center; justify-content: center; border-left: 1px solid #cfcfcf; box-shadow: inset 1px 0 0 #fafafa; }
.sh svg { width: 14px; height: 9px; }
.sb { background: #c9c9c9; flex: none; margin-bottom: 1px; }
.sb1 { height: 277px; padding: 8px 9px 0 8px; display: flex; flex-direction: column; }
.frow { display: flex; align-items: center; justify-content: space-between; height: 23px; }
.lbl { padding-top: 2px; }
.frow.add { height: 30px; margin-top: 4px; }
.combo { width: 128px; height: 24px; margin-right: 1px; display: flex; align-items: center; gap: 3px; padding-left: 5px; background: #fff; border: 1px solid #777; border-radius: 4px; position: relative; }
.cico { width: 14px; height: 14px; }
.cdrop { position: absolute; right: 0; top: 0; bottom: 0; width: 16px; border-radius: 0 3px 3px 0; background: linear-gradient(#e8f0fa, #4a90d8 45%, #a8d0f0); }
.cdrop::after { content: ""; position: absolute; left: 3px; top: 8px; border: 5px solid transparent; border-top: 6px solid #14305c; border-bottom: 0; }
.ilist { height: 199px; margin-top: 4px; flex: none; display: flex; border: 1px solid #666; background: #fff; padding: 1px 1px 0 1px; }
.items { width: 256px; flex: none; }
.items li { height: 20px; line-height: 21px; padding-left: 2px; border-bottom: 1px solid #ececec; color: #333; background: #fff; }
.items li:nth-child(odd) { background: #f5f5f5; }
.items li.sel { background: #3399ff; color: #fff; outline: 1px dotted #000; outline-offset: -1px; border-bottom: 0; }
.vscroll { flex: 1; position: relative; display: flex; flex-direction: column; align-items: center; background: #fafafa; }
.vthumb { position: absolute; top: 59px; left: 1px; width: 15px; height: 120px; border: 1px solid #aaa; border-radius: 3px; background: linear-gradient(90deg, #eee, #c0c0c0); text-align: center; line-height: 118px; font-size: 11px; color: #444; }
.tu { position: absolute; top: 8px; border: 3px solid transparent; border-bottom: 3px solid #222; border-top: 0; }
.td { position: absolute; top: 187px; border: 3px solid transparent; border-top: 3px solid #222; border-bottom: 0; }
.ibtn { width: 30px; height: 30px; margin-right: 1px; border: 1px solid #666; border-radius: 4px; background: linear-gradient(#f8f8f8, #d6d6d6); display: flex; align-items: center; justify-content: center; }
.ibtn svg { width: 27px; height: 27px; }
.sb2 { height: 215px; padding: 8px 9px 0 8px; display: flex; gap: 4px; }
.used { width: 248px; height: 199px; flex: none; border: 1px solid #555; background: #fff; overflow: hidden; }
.used li { height: 20px; display: flex; align-items: center; padding-left: 5px; border-bottom: 1px solid #ececec; background: #fff; color: #333; position: relative; }
.used li > span { padding-top: 2px; }
.used li:nth-child(even) { background: #f5f5f5; }
.used li:nth-child(-n+6)::after { content: ""; position: absolute; left: 9px; top: 14px; height: 11px; border-left: 1px dotted #888; }
.pl { width: 10px; height: 10px; flex: none; }
.dt { width: 4px; margin-left: 2px; margin-right: 2px; border-top: 1px dotted #888; flex: none; }
.side { display: flex; flex-direction: column; gap: 4px; }
.sbtn { width: 23px; height: 22px; border: 1px solid #aaa; border-radius: 4px; background: linear-gradient(#f4f4f4, #d8d8d8); display: flex; align-items: center; justify-content: center; }
.sbtn svg { width: 18px; height: 18px; }
.sb3 { height: 47px; padding: 4px 9px 0 8px; border-bottom: 1px solid #aaa; margin-bottom: 0; }
.sb3 .frow.add { margin-top: 0; height: 38px; }
.dfoot { height: 33px; margin-top: 3px; flex: none; display: flex; justify-content: flex-end; align-items: center; gap: 7px; padding-right: 11px; border-top: 1px solid #fafafa; box-shadow: 0 -1px 0 #ccc; }
.btn { width: 64px; height: 21px; border: 1px solid #666; border-radius: 3px; background: linear-gradient(#f8f8f8, #cfcfcf); text-align: center; line-height: 20px; color: #222; }
.btn.ok { background: linear-gradient(#d8f6c8, #88d86c 50%, #a8e490); border-color: #3c9040; }
.dbottom { height: 9px; flex: none; margin: 0 -1px; background: linear-gradient(#555, #111 2px); border-radius: 0 0 6px 6px; }

/* watermark */
.mark { position: absolute; left: 1065px; top: 667px; width: 301px; height: 100px; display: flex; pointer-events: none; }
.hex { width: 85px; height: 98px; flex: none; }
.marktext { margin-left: 10px; display: flex; flex-direction: column; align-items: flex-start; }
.m1 { font: 700 43px/46px "Noto Sans CJK SC", sans-serif; letter-spacing: 3px; margin-top: 17px; color: #6fc3ec; white-space: nowrap; text-shadow: 0 0 2px #fff, 0 0 1px #fff; }
.m2 { font: 700 17px/16px "Liberation Sans", sans-serif; letter-spacing: 3.500px; color: #5eaede; white-space: nowrap; text-shadow: 0 0 1px #fff, 0 0 2px #fff; }
```
